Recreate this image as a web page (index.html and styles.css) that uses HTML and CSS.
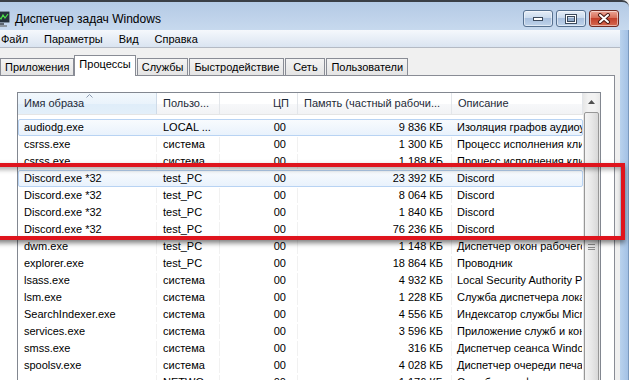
FILE: index.html
```html
<!DOCTYPE html>
<html lang="ru">
<head>
  <meta charset="UTF-8">
  <meta name="viewport" content="width=device-width, initial-scale=1.0">
  <title>Диспетчер задач Windows</title>
  <link rel="stylesheet" href="styles.css">
</head>
<body>
  <div class="window">
    <!-- Title bar -->
    <div class="titlebar">
      <svg class="app-icon" width="16" height="16" viewBox="0 0 16 16">
        <rect x="0.5" y="0.5" width="15" height="11" rx="1" fill="#26323c" stroke="#7d8c9c"/>
        <polyline points="2,8 5,6 7,8 9,4 11,7 14,3" fill="none" stroke="#4ee04a" stroke-width="1.2"/>
        <rect x="6" y="12" width="4" height="2" fill="#5d6670"/>
        <rect x="3" y="14" width="10" height="2" fill="#8c959e"/>
      </svg>
      <span class="title">Диспетчер задач Windows</span>
      <div class="caption-buttons">
        <div class="cap-btn">
          <svg width="12" height="6" viewBox="0 0 12 6"><rect x="1.5" y="1.5" width="9" height="3" fill="#fff" stroke="#3c4a5c"/></svg>
        </div>
        <div class="cap-btn">
          <svg width="12" height="10" viewBox="0 0 12 10"><rect x="1.5" y="1.5" width="9" height="7" fill="none" stroke="#3c4a5c" stroke-width="3"/><rect x="1.5" y="1.5" width="9" height="7" fill="none" stroke="#fff" stroke-width="1"/><rect x="3" y="4" width="6" height="3" fill="#8fa9c9"/></svg>
        </div>
        <div class="cap-btn close">
          <svg width="14" height="11" viewBox="0 0 14 11"><path d="M3 2 L11 9 M11 2 L3 9" stroke="#4a1a14" stroke-width="4" stroke-linecap="round"/><path d="M3 2 L11 9 M11 2 L3 9" stroke="#fff" stroke-width="2" stroke-linecap="round"/></svg>
        </div>
      </div>
    </div>

    <div class="frame">
      <div class="client">
        <!-- Menu -->
        <div class="menubar">
          <span>Файл</span>
          <span>Параметры</span>
          <span>Вид</span>
          <span>Справка</span>
        </div>

        <!-- Tabs -->
        <div class="tabs">
          <div class="tab">Приложения</div>
          <div class="tab active">Процессы</div>
          <div class="tab">Службы</div>
          <div class="tab">Быстродействие</div>
          <div class="tab">Сеть</div>
          <div class="tab">Пользователи</div>
        </div>

        <div class="panel">
          <div class="listview">
            <div class="list-main">
              <div class="list-header">
                <div class="hcell sorted">Имя образа
                  <svg class="sort-arrow" width="7" height="4" viewBox="0 0 7 4"><polyline points="0.5,3.5 3.5,0.5 6.5,3.5" fill="none" stroke="#8c9bb0"/></svg>
                </div>
                <div class="hcell">Пользо...</div>
                <div class="hcell num">ЦП</div>
                <div class="hcell">Память (частный рабочи...</div>
                <div class="hcell">Описание</div>
              </div>
              <div class="list-rows">
                <div class="row hot"><span>audiodg.exe</span><span>LOCAL ...</span><span class="num">00</span><span class="mem">9 836 КБ</span><span>Изоляция графов аудиоустройств Windows</span></div>
                <div class="row"><span>csrss.exe</span><span>система</span><span class="num">00</span><span class="mem">1 300 КБ</span><span>Процесс исполнения клиент-сервер</span></div>
                <div class="row"><span>csrss.exe</span><span>система</span><span class="num">00</span><span class="mem">1 188 КБ</span><span>Процесс исполнения клиент-сервер</span></div>
                <div class="row hot"><span>Discord.exe *32</span><span>test_PC</span><span class="num">00</span><span class="mem">23 392 КБ</span><span>Discord</span></div>
                <div class="row"><span>Discord.exe *32</span><span>test_PC</span><span class="num">00</span><span class="mem">8 064 КБ</span><span>Discord</span></div>
                <div class="row"><span>Discord.exe *32</span><span>test_PC</span><span class="num">00</span><span class="mem">1 840 КБ</span><span>Discord</span></div>
                <div class="row"><span>Discord.exe *32</span><span>test_PC</span><span class="num">00</span><span class="mem">76 236 КБ</span><span>Discord</span></div>
                <div class="row"><span>dwm.exe</span><span>test_PC</span><span class="num">00</span><span class="mem">1 148 КБ</span><span>Диспетчер окон рабочего стола</span></div>
                <div class="row"><span>explorer.exe</span><span>test_PC</span><span class="num">00</span><span class="mem">18 864 КБ</span><span>Проводник</span></div>
                <div class="row"><span>lsass.exe</span><span>система</span><span class="num">00</span><span class="mem">4 932 КБ</span><span>Local Security Authority Process</span></div>
                <div class="row"><span>lsm.exe</span><span>система</span><span class="num">00</span><span class="mem">1 228 КБ</span><span>Служба диспетчера локальных сеансов</span></div>
                <div class="row"><span>SearchIndexer.exe</span><span>система</span><span class="num">00</span><span class="mem">4 556 КБ</span><span>Индексатор службы Microsoft Windows Search</span></div>
                <div class="row"><span>services.exe</span><span>система</span><span class="num">00</span><span class="mem">3 596 КБ</span><span>Приложение служб и контроллеров</span></div>
                <div class="row"><span>smss.exe</span><span>система</span><span class="num">00</span><span class="mem">316 КБ</span><span>Диспетчер сеанса  Windows</span></div>
                <div class="row"><span>spoolsv.exe</span><span>система</span><span class="num">00</span><span class="mem">4 028 КБ</span><span>Диспетчер очереди печати</span></div>
                <div class="row"><span>sppsvc.exe</span><span>NETWO...</span><span class="num">00</span><span class="mem">1 176 КБ</span><span>Служба платформы защиты ПО</span></div>
              </div>
            </div>
            <div class="scrollbar">
              <div class="sb-up">
                <svg width="7" height="4" viewBox="0 0 7 4"><polygon points="0,4 3.5,0 7,4" fill="#4f4f4f"/></svg>
              </div>
              <div class="sb-track">
                <div class="sb-thumb">
                  <div class="grip"></div>
                </div>
              </div>
            </div>
          </div>
        </div>
      </div>
      <div class="frame-right"></div>
    </div>

    <!-- red annotation box -->
    <div class="callout"></div>
  </div>
</body>
</html>
```

FILE: styles.css
```css
* {
  box-sizing: border-box;
}
body {
  margin: 0;
  width: 629px;
  height: 380px;
  overflow: hidden;
  font-family: "Liberation Sans", Arial, sans-serif;
  font-size: 11px;
  color: #000;
  background: #f0f0f0;
}
.window {
  position: relative;
  height: 380px;
}

/* title bar */
.titlebar {
  display: flex;
  align-items: flex-start;
  height: 30px;
  border-top: 2px solid #3a3f46;
  border-top-right-radius: 7px;
  background: linear-gradient(#b4cae5, #c7d9ee);
}
.app-icon {
  margin: 9px 5px 0 -6px;
  flex-shrink: 0;
}
.title {
  margin-top: 10px;
  line-height: 14px;
  font-size: 12px;
  color: #000;
}
.caption-buttons {
  display: flex;
  gap: 3px;
  margin-left: auto;
  margin-top: 8px;
  padding-right: 10px;
}
.cap-btn {
  width: 30px;
  height: 17px;
  border: 1px solid #56708f;
  border-radius: 3px;
  background: linear-gradient(#e4ecf6 0%, #cbdbee 45%, #a9c0de 50%, #bfd3ea 100%);
  display: flex;
  align-items: center;
  justify-content: center;
  box-shadow: inset 0 0 0 1px rgba(255, 255, 255, 0.5);
}
.cap-btn.close {
  border-color: #6f2a22;
  background: linear-gradient(#eba596 0%, #d86f5a 45%, #c2402b 50%, #d5694f 100%);
}

.frame {
  display: flex;
  height: 350px;
}
.client {
  width: 620px;
  display: flex;
  flex-direction: column;
  background: #f0f0f0;
}
.frame-right {
  flex: 1;
  background: linear-gradient(to right, #b9d2ed, #a3c1e5);
  border-right: 1px solid #7b99bd;
}

/* menu */
.menubar {
  flex-shrink: 0;
  display: flex;
  gap: 16px;
  height: 18px;
  padding: 3px 0 0 1px;
  line-height: 13px;
  background: linear-gradient(#f5f8fc, #dae4f1);
  border-bottom: 1px solid #b4bac4;
}

/* tabs */
.tabs {
  flex-shrink: 0;
  display: flex;
  align-items: flex-end;
  gap: 1px;
  height: 27px;
}
.tab {
  min-width: 40px;
  height: 17px;
  padding: 0 4px;
  line-height: 16px;
  text-align: center;
  border: 1px solid #898c95;
  border-bottom: none;
  background: linear-gradient(#f4f4f4, #e4e4e4);
}
.tab.active {
  position: relative;
  z-index: 1;
  height: 21px;
  margin: 0 0 -1px -1px;
  padding: 1px 4px 0;
  line-height: 15px;
  background: #fff;
}

.panel {
  flex: 1;
  min-height: 0;
  width: 615px;
  padding: 16px 0 0 17px;
  background: #fff;
  border-top: 1px solid #898c95;
  border-right: 1px solid #898c95;
}

/* list view */
.listview {
  display: flex;
  width: 584px;
  height: 300px;
  border: 1px solid #828790;
  border-bottom: none;
}
.list-main {
  width: 565px;
}
.list-header,
.row {
  display: grid;
  grid-template-columns: 139px 63px 78px 154px 131px;
}
.list-header {
  height: 22px;
  line-height: 21px;
  border-bottom: 1px solid #e5e5e5;
  background: linear-gradient(#ffffff 0%, #ffffff 50%, #f7f8fa 51%, #f2f3f5 100%);
}
.hcell {
  position: relative;
  padding: 0 6px;
  white-space: nowrap;
  overflow: hidden;
  border-right: 1px solid #e3e6ea;
  color: #1e2a38;
}
.hcell.sorted {
  background: linear-gradient(#f2f8fd 0%, #eaf3fb 50%, #dfedf9 51%, #e3eff9 100%);
  border-right-color: #cfdbe8;
}
.hcell.num {
  text-align: right;
  padding-right: 8px;
}
.sort-arrow {
  position: absolute;
  left: 68px;
  top: 1px;
}

.list-rows {
  padding-top: 4px;
}
.row {
  height: 17px;
  line-height: 15px;
  border: 1px solid transparent;
  border-radius: 2px;
  grid-template-columns: 138px 63px 78px 154px 130px;
}
.row span {
  padding: 0 6px;
  white-space: nowrap;
  overflow: hidden;
  border-right: 1px solid #f1f1f1;
}
.row span:first-child {
  padding-left: 5px;
}
.row span:last-child {
  border-right: none;
  padding-left: 5px;
}
.row .num {
  text-align: right;
  padding-right: 11px;
}
.row .mem {
  text-align: right;
  padding-right: 8px;
}
.row.hot {
  border-color: #b8d3f3;
  background: linear-gradient(#f8fbfe, #e9f2fc);
}
.row.hot span {
  border-right-color: transparent;
}

/* scrollbar */
.scrollbar {
  width: 17px;
  display: flex;
  flex-direction: column;
  background: linear-gradient(to right, #e6e6e6, #f2f2f2 30%, #f2f2f2 70%, #e9e9e9);
}
.sb-up {
  flex-shrink: 0;
  height: 17px;
  display: flex;
  align-items: center;
  justify-content: center;
}
.sb-track {
  flex: 1;
  padding: 2px 1px 0;
}
.sb-thumb {
  height: 270px;
  border: 1px solid #979797;
  border-radius: 2px;
  background: linear-gradient(to right, #f4f4f4, #e8e8e8 50%, #d8d8d8);
  display: flex;
  align-items: center;
  justify-content: center;
}
.grip {
  width: 7px;
  height: 6px;
  border-top: 1px solid #8a8a8a;
  border-bottom: 1px solid #8a8a8a;
  background: linear-gradient(transparent 2px, #8a8a8a 2px, #8a8a8a 3px, transparent 3px);
}

/* red annotation frame */
.callout {
  position: absolute;
  left: -10px;
  top: 163px;
  width: 635px;
  height: 77px;
  border: 4px solid #df141d;
  box-shadow: 0 3px 5px rgba(0, 0, 0, 0.5), inset 0 3px 4px rgba(0, 0, 0, 0.3);
}
```
